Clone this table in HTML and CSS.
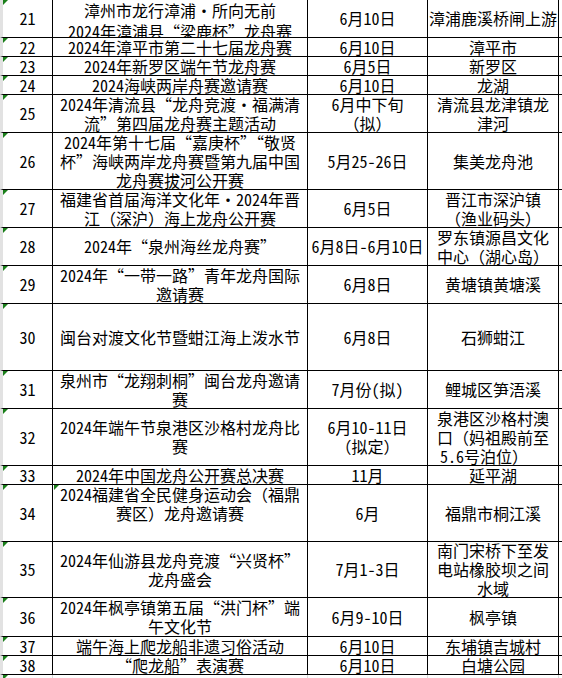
FILE: index.html
```html
<!DOCTYPE html>
<html lang="zh-CN">
<head>
<meta charset="utf-8">
<title>龙舟赛事一览</title>
<link rel="stylesheet" href="styles.css">
</head>
<body>
<div class="sheet">
  <div class="row h38">
    <div class="cell num"><div class="t">21</div></div>
    <div class="cell first"><div class="t">漳州市龙行漳浦<span class="dot">·</span>所向无前<br>2024年漳浦县“梁鹿杯”龙舟赛</div></div>
    <div class="cell"><div class="t">6月10日</div></div>
    <div class="cell"><div class="t">漳浦鹿溪桥闸上游</div></div>
    <div class="cell rest"></div>
  </div>
  <div class="row h19">
    <div class="cell num"><div class="t">22</div></div>
    <div class="cell"><div class="t">2024年漳平市第二十七届龙舟赛</div></div>
    <div class="cell"><div class="t">6月10日</div></div>
    <div class="cell"><div class="t">漳平市</div></div>
    <div class="cell rest"></div>
  </div>
  <div class="row h19">
    <div class="cell num"><div class="t">23</div></div>
    <div class="cell"><div class="t">2024年新罗区端午节龙舟赛</div></div>
    <div class="cell"><div class="t">6月5日</div></div>
    <div class="cell"><div class="t">新罗区</div></div>
    <div class="cell rest"></div>
  </div>
  <div class="row h19">
    <div class="cell num"><div class="t">24</div></div>
    <div class="cell"><div class="t">2024海峡两岸舟赛邀请赛</div></div>
    <div class="cell"><div class="t">6月10日</div></div>
    <div class="cell"><div class="t">龙湖</div></div>
    <div class="cell rest"></div>
  </div>
  <div class="row h38">
    <div class="cell num"><div class="t">25</div></div>
    <div class="cell"><div class="t">2024年清流县“龙舟竞渡<span class="dot">·</span>福满清<br>流”第四届龙舟赛主题活动</div></div>
    <div class="cell"><div class="t">6月中下旬<br>（拟）</div></div>
    <div class="cell"><div class="t">清流县龙津镇龙<br>津河</div></div>
    <div class="cell rest"></div>
  </div>
  <div class="row h57">
    <div class="cell num"><div class="t">26</div></div>
    <div class="cell"><div class="t">2024年第十七届“嘉庚杯”“敬贤<br>杯”海峡两岸龙舟赛暨第九届中国<br>龙舟赛拔河公开赛</div></div>
    <div class="cell"><div class="t">5月25-26日</div></div>
    <div class="cell"><div class="t">集美龙舟池</div></div>
    <div class="cell rest"></div>
  </div>
  <div class="row h38">
    <div class="cell num"><div class="t">27</div></div>
    <div class="cell"><div class="t">福建省首届海洋文化年<span class="dot">·</span>2024年晋<br>江（深沪）海上龙舟公开赛</div></div>
    <div class="cell"><div class="t">6月5日</div></div>
    <div class="cell"><div class="t">晋江市深沪镇<br>（渔业码头）</div></div>
    <div class="cell rest"></div>
  </div>
  <div class="row h38">
    <div class="cell num"><div class="t">28</div></div>
    <div class="cell"><div class="t">2024年“泉州海丝龙舟赛”</div></div>
    <div class="cell"><div class="t">6月8日-6月10日</div></div>
    <div class="cell"><div class="t">罗东镇源昌文化<br>中心（湖心岛）</div></div>
    <div class="cell rest"></div>
  </div>
  <div class="row h38">
    <div class="cell num"><div class="t">29</div></div>
    <div class="cell"><div class="t">2024年“一带一路”青年龙舟国际<br>邀请赛</div></div>
    <div class="cell"><div class="t">6月8日</div></div>
    <div class="cell"><div class="t">黄塘镇黄塘溪</div></div>
    <div class="cell rest"></div>
  </div>
  <div class="row h67">
    <div class="cell num"><div class="t">30</div></div>
    <div class="cell"><div class="t">闽台对渡文化节暨蚶江海上泼水节</div></div>
    <div class="cell"><div class="t">6月8日</div></div>
    <div class="cell"><div class="t">石狮蚶江</div></div>
    <div class="cell rest"></div>
  </div>
  <div class="row h38">
    <div class="cell num"><div class="t">31</div></div>
    <div class="cell"><div class="t">泉州市“龙翔刺桐”闽台龙舟邀请<br>赛</div></div>
    <div class="cell"><div class="t">7月份(拟)</div></div>
    <div class="cell"><div class="t">鲤城区笋浯溪</div></div>
    <div class="cell rest"></div>
  </div>
  <div class="row h57">
    <div class="cell num"><div class="t">32</div></div>
    <div class="cell"><div class="t">2024年端午节泉港区沙格村龙舟比<br>赛</div></div>
    <div class="cell"><div class="t">6月10-11日<br>（拟定）</div></div>
    <div class="cell"><div class="t">泉港区沙格村澳<br>口（妈祖殿前至<br><span class="tail-pad">5.6号泊位）</span></div></div>
    <div class="cell rest"></div>
  </div>
  <div class="row h19">
    <div class="cell num"><div class="t">33</div></div>
    <div class="cell"><div class="t">2024年中国龙舟公开赛总决赛</div></div>
    <div class="cell"><div class="t">11月</div></div>
    <div class="cell"><div class="t">延平湖</div></div>
    <div class="cell rest"></div>
  </div>
  <div class="row h57">
    <div class="cell num"><div class="t">34</div></div>
    <div class="cell top flag"><div class="t">2024福建省全民健身运动会（福鼎<br>赛区）龙舟邀请赛</div></div>
    <div class="cell"><div class="t">6月</div></div>
    <div class="cell"><div class="t">福鼎市桐江溪</div></div>
    <div class="cell rest"></div>
  </div>
  <div class="row h56">
    <div class="cell num"><div class="t">35</div></div>
    <div class="cell"><div class="t">2024年仙游县龙舟竞渡“兴贤杯”<br>龙舟盛会</div></div>
    <div class="cell"><div class="t">7月1-3日</div></div>
    <div class="cell"><div class="t">南门宋桥下至发<br>电站橡胶坝之间<br>水域</div></div>
    <div class="cell rest"></div>
  </div>
  <div class="row h39">
    <div class="cell num"><div class="t">36</div></div>
    <div class="cell"><div class="t">2024年枫亭镇第五届“洪门杯”端<br>午文化节</div></div>
    <div class="cell"><div class="t">6月9-10日</div></div>
    <div class="cell"><div class="t">枫亭镇</div></div>
    <div class="cell rest"></div>
  </div>
  <div class="row h19">
    <div class="cell num"><div class="t">37</div></div>
    <div class="cell"><div class="t">端午海上爬龙船非遗习俗活动</div></div>
    <div class="cell"><div class="t">6月10日</div></div>
    <div class="cell"><div class="t">东埔镇吉城村</div></div>
    <div class="cell rest"></div>
  </div>
  <div class="row h19">
    <div class="cell num"><div class="t">38</div></div>
    <div class="cell"><div class="t">“爬龙船”表演赛</div></div>
    <div class="cell"><div class="t">6月10日</div></div>
    <div class="cell"><div class="t">白塘公园</div></div>
    <div class="cell rest"></div>
  </div>
  <div class="row blank">
    <div class="cell num"></div>
    <div class="cell"></div>
    <div class="cell"></div>
    <div class="cell"></div>
    <div class="cell rest"></div>
  </div>
</div>
</body>
</html>
```

FILE: styles.css
```css
* {
  box-sizing: border-box;
}

html, body {
  margin: 0;
  padding: 0;
  background: #ffffff;
}

body {
  font-family: "Noto Sans Mono CJK SC", "Noto Sans CJK SC", "DejaVu Sans", sans-serif;
  font-size: 16px;
  color: #000000;
  width: 562px;
  height: 678px;
  overflow: hidden;
}

.sheet {
  display: flex;
  flex-direction: column;
}

.row {
  display: grid;
  grid-template-columns: 53px 255px 120px 131px 1fr;
}

.h19 { height: 19px; }
.h38 { height: 38px; }
.h39 { height: 39px; }
.h56 { height: 56px; }
.h57 { height: 57px; }
.h67 { height: 67px; }
.blank { height: 20px; }

.cell {
  position: relative;
  display: flex;
  flex-direction: column;
  justify-content: center;
  align-items: center;
  overflow: hidden;
  border-right: 1px solid #000000;
  border-bottom: 1px solid #000000;
}

.t {
  text-align: center;
  line-height: 19px;
  white-space: nowrap;
}

.cell.rest {
  border-right: none;
}

.cell.num {
  border-left: 3px solid #e2e2e2;
}

.cell.num::before,
.cell.flag::before {
  content: "";
  position: absolute;
  top: 0;
  left: 0;
  width: 0;
  height: 0;
  border-top: 5px solid #1a7f1a;
  border-right: 5px solid transparent;
}

.cell.flag::before {
  left: 1px;
}

.cell.first {
  justify-content: flex-start;
}

.cell.first .t {
  line-height: 21px;
}

.cell.top {
  justify-content: flex-start;
}

.dot {
  display: inline-block;
  width: 16px;
  text-align: center;
}

.tail-pad {
  padding-right: 18px;
}

.blank .cell {
  border-bottom: none;
  border-right-color: #d8d8d8;
}

.blank .cell.rest {
  border-right: none;
}
```
